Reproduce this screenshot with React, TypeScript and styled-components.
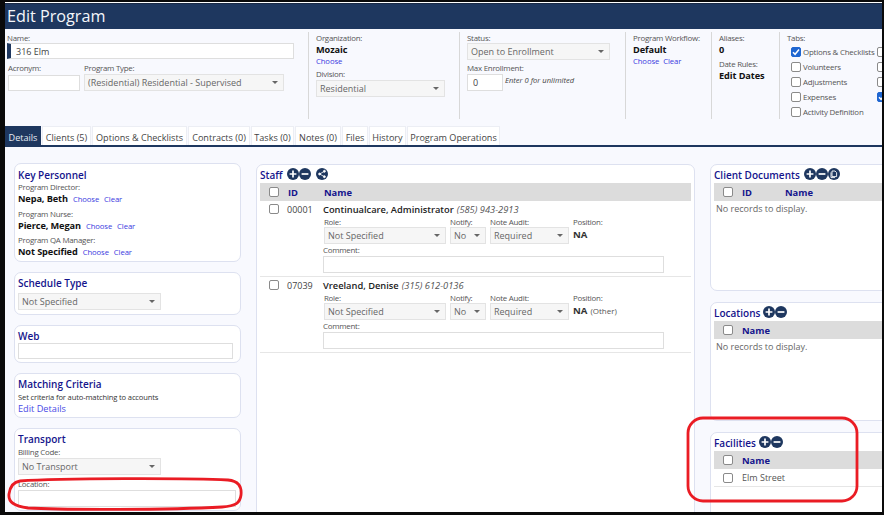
import React from 'react';
import styled, { createGlobalStyle } from 'styled-components';

const Global = createGlobalStyle`
  html, body { margin: 0; padding: 0; background: #000; }
  body { font-family: "Open Sans", "Noto Sans", "Liberation Sans", sans-serif; }
  * { box-sizing: border-box; }
`;

const Frame = styled.div`
  position: relative;
  width: 884px;
  height: 515px;
  padding: 2px 2px 3px 5px;
  background: #0a0a0a;
  overflow: hidden;
`;

const Page = styled.div`
  width: 877px;
  height: 510px;
  border-top: 1px solid #fff;
  background: #f8f9fe;
  overflow: hidden;
`;

const TitleBar = styled.div`
  height: 26px;
  padding: 1px 0 0 2px;
  border-top: 1px solid #1a2a45;
  background: #1e375f;
  color: #f4f6fa;
  font-size: 16.2px;
  line-height: 23px;
`;

const TopForm = styled.div`
  display: flex;
  height: 97px;
  padding-top: 3px;
`;

const FormCol = styled.div<{ $w: number; $first?: boolean }>`
  flex: 0 0 ${(p) => p.$w}px;
  height: 87px;
  padding: ${(p) => (p.$first ? '0 0 0 2px' : '1px 0 0 7px')};
  border-right: 1px solid #d8d8d8;
`;

const TabsCol = styled.div`
  flex: 1;
  padding: 1px 0 0 7px;
  overflow: hidden;
`;

const Label = styled.div`
  color: #555;
  font-size: 7.9px;
  letter-spacing: -0.25px;
  line-height: 11px;
  white-space: nowrap;
`;

const Strong = styled.div`
  color: #111;
  font-size: 9.2px;
  font-weight: 700;
  letter-spacing: -0.1px;
  line-height: 12px;
  white-space: nowrap;
`;

const Links = styled.div`
  display: flex;
  gap: 4px;
  line-height: 11px;
`;

const Link = styled.span`
  color: #3a3ae0;
  font-size: 7.7px;
  letter-spacing: -0.1px;
  line-height: 11px;
  white-space: nowrap;
`;

const TextInput = styled.input<{ $w: number; $h?: number; $mark?: boolean }>`
  display: block;
  width: ${(p) => p.$w}px;
  height: ${(p) => p.$h ?? 17}px;
  padding: 0 0 0 5px;
  border: 1px solid #dedede;
  ${(p) => (p.$mark ? 'border-left: 4px solid #1e375f;' : '')}
  background: #fff;
  color: #444;
  font-family: inherit;
  font-size: 9px;
  outline: none;
`;

const SelectBox = styled.div<{ $w: number }>`
  position: relative;
  display: flex;
  align-items: center;
  width: ${(p) => p.$w}px;
  height: 17px;
  padding-left: 3px;
  border: 1px solid #e3e3e3;
  background: #f6f6f6;
  color: #666;
  font-size: 9px;
  white-space: nowrap;

  &::after {
    content: '';
    position: absolute;
    right: 5px;
    top: 6px;
    border-left: 3px solid transparent;
    border-right: 3px solid transparent;
    border-top: 3px solid #666;
  }
`;

const NameRow = styled.div`
  padding-top: 1px;

  ${TextInput} {
    margin-top: -1px;
  }
`;

const AcronymRow = styled.div`
  display: flex;
  gap: 4px;
  margin-top: 4px;
  margin-left: 1px;
`;

const AcronymField = styled.div`
  ${TextInput} {
    margin-top: 1px;
  }
`;

const EnrollRow = styled.div`
  display: flex;
  gap: 2px;
`;

const Hint = styled.span`
  color: #444;
  font-size: 7.6px;
  font-style: italic;
  line-height: 12px;
  white-space: nowrap;
`;

const Spaced = styled.div<{ $top: number }>`
  margin-top: ${(p) => p.$top}px;
`;

const CheckGrid = styled.div`
  display: grid;
  grid-template-columns: 86px 20px;
  grid-auto-rows: 15px;
  padding-left: 4px;
`;

const CheckItem = styled.div`
  display: flex;
  align-items: center;
  gap: 2px;
  color: #555;
  font-size: 7.9px;
  letter-spacing: -0.2px;
  white-space: nowrap;
`;

const Check = styled.span<{ $on?: boolean }>`
  flex: 0 0 auto;
  display: inline-flex;
  align-items: center;
  justify-content: center;
  width: 10px;
  height: 10px;
  border: 1px solid ${(p) => (p.$on ? '#1f66d1' : '#8a8a8a')};
  border-radius: 2px;
  background: ${(p) => (p.$on ? '#1f66d1' : '#fff')};
`;

const TabBar = styled.div`
  display: flex;
  gap: 1px;
  height: 21px;
  border-bottom: 2px solid #1e375f;
`;

const Tab = styled.div<{ $active?: boolean; $w: number }>`
  flex: 0 0 ${(p) => p.$w}px;
  text-align: center;
  border: 1px solid ${(p) => (p.$active ? '#1e375f' : '#eceef4')};
  border-bottom: 0;
  background: ${(p) => (p.$active ? '#1e375f' : '#fff')};
  color: ${(p) => (p.$active ? '#e8ecf4' : '#444')};
  font-size: 9.1px;
  line-height: 21px;
  white-space: nowrap;
`;

const Content = styled.div`
  display: grid;
  grid-template-columns: 227px 439px 300px;
  column-gap: 15px;
  padding: 16px 0 0 9px;
`;

const Column = styled.div<{ $gap: number; $top?: number }>`
  display: flex;
  flex-direction: column;
  gap: ${(p) => p.$gap}px;
  margin-top: ${(p) => p.$top ?? 0}px;
`;

const Panel = styled.div<{ $h?: number; $pad?: string }>`
  flex: 0 0 auto;
  height: ${(p) => (p.$h ? `${p.$h}px` : 'auto')};
  padding: ${(p) => p.$pad ?? '3px 3px'};
  border: 1px solid #dde1f0;
  border-radius: 7px;
  background: #fff;
`;

const PanelTitle = styled.div`
  display: flex;
  align-items: center;
  gap: 1px;
  height: 15px;
  color: #14148c;
  font-size: 10px;
  font-weight: 600;
  line-height: 15px;
  white-space: nowrap;
`;

const PersonRow = styled.div`
  display: flex;
  align-items: baseline;
  gap: 5px;
  height: 15.5px;
  line-height: 13px;
`;

const PlainText = styled.div`
  color: #333;
  font-size: 7.6px;
  letter-spacing: -0.15px;
  line-height: 11px;
  white-space: nowrap;
`;

const EditLink = styled.div`
  color: #4a4ae6;
  font-size: 9.2px;
  line-height: 12px;
`;

const HeadRow = styled.div<{ $cols: string }>`
  display: grid;
  grid-template-columns: ${(p) => p.$cols};
  align-items: center;
  height: 18px;
  background: #dcdcdc;
  color: #14148c;
  font-size: 9.4px;
  font-weight: 700;
`;

const CheckCell = styled.div`
  display: flex;
  justify-content: center;
`;

const StaffRow = styled.div`
  display: grid;
  grid-template-columns: 27px 36px 1fr;
  height: 76px;
  padding-top: 3px;
  border-bottom: 1px solid #e6e6e6;
`;

const StaffId = styled.div`
  color: #444;
  font-size: 9px;
  line-height: 11px;
`;

const StaffName = styled.div`
  color: #222;
  font-size: 9.3px;
  font-weight: 600;
  line-height: 11px;
  white-space: nowrap;

  em {
    color: #555;
    font-weight: 400;
    margin-left: 3px;
  }
`;

const StaffFields = styled.div`
  display: flex;
  margin-top: 2px;
  margin-left: 1px;
`;

const StaffField = styled.div<{ $w: number }>`
  flex: 0 0 ${(p) => p.$w}px;

  ${SelectBox} {
    margin-top: -1px;
  }
`;

const PositionValue = styled.div`
  color: #333;
  font-size: 9.6px;
  font-weight: 700;
  line-height: 13px;
  white-space: nowrap;

  small {
    color: #555;
    font-size: 8px;
    font-weight: 400;
    margin-left: 3px;
  }
`;

const CommentBlock = styled.div`
  margin-top: 1px;
`;

const Empty = styled.div`
  padding: 2px 0 0 2px;
  color: #666;
  font-size: 9px;
  line-height: 12px;
`;

const FacilityRow = styled.div`
  display: grid;
  grid-template-columns: 28px 1fr;
  align-items: center;
  height: 18px;
  border-bottom: 1px solid #e6e6e6;
  color: #555;
  font-size: 9px;
`;

const IconGroup = styled.span<{ $left?: number }>`
  display: inline-flex;
  margin-left: ${(p) => p.$left ?? 2}px;
  position: relative;
  top: -2px;
`;

const Annotation = styled.svg`
  position: absolute;
  left: 0;
  top: 0;
  pointer-events: none;
`;

const RoundIcon: React.FC<{ kind: 'plus' | 'minus' | 'share' | 'copy' }> = ({ kind }) => (
  <svg width="12" height="12" viewBox="0 0 12 12">
    <circle cx="6" cy="6" r="6" fill="#1e375f" />
    {kind === 'plus' && <path d="M6 2.6v6.8M2.6 6h6.8" stroke="#fff" strokeWidth="1.7" />}
    {kind === 'minus' && <path d="M2.6 6h6.8" stroke="#fff" strokeWidth="1.7" />}
    {kind === 'share' && (
      <g fill="#fff" stroke="#fff" strokeWidth="0.8">
        <path d="M8.4 3.3 3.6 6l4.8 2.7" fill="none" />
        <circle cx="8.4" cy="3.3" r="1" />
        <circle cx="3.6" cy="6" r="1" />
        <circle cx="8.4" cy="8.7" r="1" />
      </g>
    )}
    {kind === 'copy' && (
      <path d="M4 3h3l1.6 1.6V8.6H4zM3 4.4V9.6h4" fill="none" stroke="#fff" strokeWidth="0.9" />
    )}
  </svg>
);

const Tick = () => (
  <svg width="8" height="8" viewBox="0 0 8 8">
    <path d="M1 4.2 3.1 6.3 7 1.6" fill="none" stroke="#fff" strokeWidth="1.5" />
  </svg>
);

const tabs = [
  { label: 'Details', w: 36, active: true },
  { label: 'Clients (5)', w: 49 },
  { label: 'Options & Checklists', w: 95 },
  { label: 'Contracts (0)', w: 62 },
  { label: 'Tasks (0)', w: 43 },
  { label: 'Notes (0)', w: 46 },
  { label: 'Files', w: 26 },
  { label: 'History', w: 37 },
  { label: 'Program Operations', w: 93 },
];

const staff = [
  { id: '00001', name: 'Continualcare, Administrator', phone: '(585) 943-2913', other: false },
  { id: '07039', name: 'Vreeland, Denise', phone: '(315) 612-0136', other: true },
];

const people = [
  { role: 'Program Director:', name: 'Nepa, Beth' },
  { role: 'Program Nurse:', name: 'Pierce, Megan' },
  { role: 'Program QA Manager:', name: 'Not Specified' },
];

const App: React.FC = () => (
  <>
    <Global />
    <Frame>
      <Page>
        <TitleBar>Edit Program</TitleBar>
        <TopForm>
          <FormCol $w={304} $first>
            <NameRow>
              <Label>Name:</Label>
              <TextInput $w={287} $h={16} $mark defaultValue="316 Elm" />
            </NameRow>
            <AcronymRow>
              <AcronymField>
                <Label>Acronym:</Label>
                <TextInput $w={72} $h={16} />
              </AcronymField>
              <div>
                <Label>Program Type:</Label>
                <SelectBox $w={200}>(Residential) Residential - Supervised</SelectBox>
              </div>
            </AcronymRow>
          </FormCol>
          <FormCol $w={151}>
            <Label>Organization:</Label>
            <Strong>Mozaic</Strong>
            <Links>
              <Link>Choose</Link>
            </Links>
            <Spaced $top={2}>
              <Label>Division:</Label>
              <SelectBox $w={129}>Residential</SelectBox>
            </Spaced>
          </FormCol>
          <FormCol $w={166}>
            <Label>Status:</Label>
            <Spaced $top={-1}>
              <SelectBox $w={143}>Open to Enrollment</SelectBox>
            </Spaced>
            <Spaced $top={3}>
              <Label>Max Enrollment:</Label>
              <EnrollRow>
                <TextInput $w={36} defaultValue="0" />
                <Hint>Enter 0 for unlimited</Hint>
              </EnrollRow>
            </Spaced>
          </FormCol>
          <FormCol $w={86}>
            <Label>Program Workflow:</Label>
            <Strong>Default</Strong>
            <Links>
              <Link>Choose</Link>
              <Link>Clear</Link>
            </Links>
          </FormCol>
          <FormCol $w={68}>
            <Label>Aliases:</Label>
            <Strong>0</Strong>
            <Spaced $top={3}>
              <Label>Date Rules:</Label>
              <Strong>Edit Dates</Strong>
            </Spaced>
          </FormCol>
          <TabsCol>
            <Label>Tabs:</Label>
            <CheckGrid>
              <CheckItem><Check $on><Tick /></Check>Options &amp; Checklists</CheckItem>
              <CheckItem><Check /></CheckItem>
              <CheckItem><Check />Volunteers</CheckItem>
              <CheckItem><Check /></CheckItem>
              <CheckItem><Check />Adjustments</CheckItem>
              <CheckItem><Check /></CheckItem>
              <CheckItem><Check />Expenses</CheckItem>
              <CheckItem><Check $on><Tick /></Check></CheckItem>
              <CheckItem><Check />Activity Definition</CheckItem>
            </CheckGrid>
          </TabsCol>
        </TopForm>
        <TabBar>
          {tabs.map((t) => (
            <Tab key={t.label} $w={t.w} $active={t.active}>{t.label}</Tab>
          ))}
        </TabBar>
        <Content>
          <Column $gap={10}>
            <Panel $h={99} $pad="4px 3px">
              <PanelTitle>Key Personnel</PanelTitle>
              <Spaced $top={-1}>
                {people.map((p) => (
                  <div key={p.role}>
                    <Label>{p.role}</Label>
                    <PersonRow>
                      <Strong>{p.name}</Strong>
                      <Link>Choose</Link>
                      <Link>Clear</Link>
                    </PersonRow>
                  </div>
                ))}
              </Spaced>
            </Panel>
            <Panel $h={43}>
              <PanelTitle>Schedule Type</PanelTitle>
              <Spaced $top={2}>
                <SelectBox $w={143}>Not Specified</SelectBox>
              </Spaced>
            </Panel>
            <Panel $h={38}>
              <PanelTitle>Web</PanelTitle>
              <Spaced $top={-1}>
                <TextInput $w={215} $h={16} />
              </Spaced>
            </Panel>
            <Panel $h={45}>
              <PanelTitle>Matching Criteria</PanelTitle>
              <PlainText>Set criteria for auto-matching to accounts</PlainText>
              <EditLink>Edit Details</EditLink>
            </Panel>
            <Panel>
              <PanelTitle>Transport</PanelTitle>
              <Label>Billing Code:</Label>
              <SelectBox $w={143}>No Transport</SelectBox>
              <Spaced $top={4}>
                <Label>Location:</Label>
                <TextInput $w={218} />
              </Spaced>
            </Panel>
          </Column>
          <Column $gap={0} $top={1}>
            <Panel $h={400}>
              <PanelTitle>
                Staff
                <IconGroup $left={3}>
                  <RoundIcon kind="plus" />
                  <RoundIcon kind="minus" />
                </IconGroup>
                <IconGroup $left={4}>
                  <RoundIcon kind="share" />
                </IconGroup>
              </PanelTitle>
              <HeadRow $cols="28px 36px 1fr">
                <CheckCell><Check /></CheckCell>
                <div>ID</div>
                <div>Name</div>
              </HeadRow>
              {staff.map((s) => (
                <StaffRow key={s.id}>
                  <CheckCell><Check /></CheckCell>
                  <StaffId>{s.id}</StaffId>
                  <div>
                    <StaffName>{s.name}<em>{s.phone}</em></StaffName>
                    <StaffFields>
                      <StaffField $w={126}>
                        <Label>Role:</Label>
                        <SelectBox $w={122}>Not Specified</SelectBox>
                      </StaffField>
                      <StaffField $w={40}>
                        <Label>Notify:</Label>
                        <SelectBox $w={36}>No</SelectBox>
                      </StaffField>
                      <StaffField $w={83}>
                        <Label>Note Audit:</Label>
                        <SelectBox $w={79}>Required</SelectBox>
                      </StaffField>
                      <StaffField $w={90}>
                        <Label>Position:</Label>
                        <PositionValue>NA{s.other && <small>(Other)</small>}</PositionValue>
                      </StaffField>
                    </StaffFields>
                    <CommentBlock>
                      <Label>Comment:</Label>
                      <TextInput $w={341} />
                    </CommentBlock>
                  </div>
                </StaffRow>
              ))}
            </Panel>
          </Column>
          <Column $gap={11} $top={1}>
            <Panel $h={127}>
              <PanelTitle>
                Client Documents
                <IconGroup $left={3}>
                  <RoundIcon kind="plus" />
                  <RoundIcon kind="minus" />
                  <RoundIcon kind="copy" />
                </IconGroup>
              </PanelTitle>
              <HeadRow $cols="28px 43px 1fr">
                <CheckCell><Check /></CheckCell>
                <div>ID</div>
                <div>Name</div>
              </HeadRow>
              <Empty>No records to display.</Empty>
            </Panel>
            <Panel $h={119}>
              <PanelTitle>
                Locations
                <IconGroup>
                  <RoundIcon kind="plus" />
                  <RoundIcon kind="minus" />
                </IconGroup>
              </PanelTitle>
              <HeadRow $cols="28px 1fr">
                <CheckCell><Check /></CheckCell>
                <div>Name</div>
              </HeadRow>
              <Empty>No records to display.</Empty>
            </Panel>
            <Panel $h={120}>
              <PanelTitle>
                Facilities
                <IconGroup>
                  <RoundIcon kind="plus" />
                  <RoundIcon kind="minus" />
                </IconGroup>
              </PanelTitle>
              <HeadRow $cols="28px 1fr">
                <CheckCell><Check /></CheckCell>
                <div>Name</div>
              </HeadRow>
              <FacilityRow>
                <CheckCell><Check /></CheckCell>
                <div>Elm Street</div>
              </FacilityRow>
            </Panel>
          </Column>
        </Content>
      </Page>
      <Annotation width="884" height="515" viewBox="0 0 884 515" fill="none" stroke="#ea1c24" strokeWidth="2.8">
        <path d="M20 481C60 478 190 478 228 480C238 481 242 486 241 495C240 503 236 506 222 507C170 510 60 510 28 508C14 506 8 502 9 494C10 487 13 482 20 481" />
        <rect x="688" y="418" width="169" height="83" rx="15" />
      </Annotation>
    </Frame>
  </>
);

export default App;
